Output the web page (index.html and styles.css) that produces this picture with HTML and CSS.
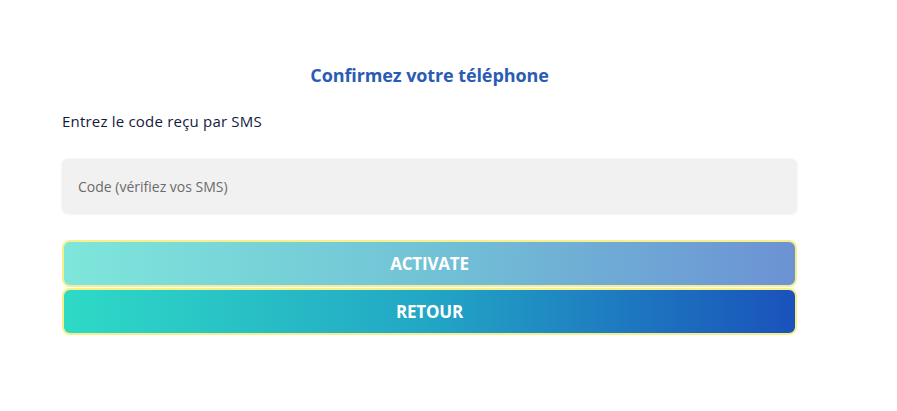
FILE: index.html
```html
<!DOCTYPE html>
<html lang="fr">
<head>
<meta charset="utf-8">
<link rel="stylesheet" href="styles.css">
</head>
<body>
<main class="page">
  <h1 class="title">Confirmez votre téléphone</h1>
  <p class="label">Entrez le code reçu par SMS</p>
  <div class="field">
    <input class="input" type="text" placeholder="Code (vérifiez vos SMS)" autofocus>
  </div>
  <div class="actions">
    <button class="btn btn-disabled">ACTIVATE</button>
    <button class="btn btn-primary">RETOUR</button>
  </div>
</main>
</body>
</html>
```

FILE: styles.css
```css
html, body {
  margin: 0;
  padding: 0;
  background: #ffffff;
}
body {
  font-family: "Open Sans", "Noto Sans", sans-serif;
}
.page {
  width: 735px;
  margin-left: 62px;
  padding-top: 61px;
  display: flex;
  flex-direction: column;
}
.title {
  margin: 0;
  text-align: center;
  font-size: 18px;
  font-weight: 700;
  color: #2a5cb3;
  line-height: 28px;
  letter-spacing: -0.1px;
}
.label {
  margin: 22px 0 0 0;
  font-size: 15px;
  color: #141a3c;
  line-height: 20px;
  letter-spacing: 0.2px;
}
.field {
  margin-top: 28px;
}
.input {
  box-sizing: border-box;
  width: 100%;
  height: 55px;
  border: none;
  border-radius: 6px;
  background: #f1f1f1;
  box-shadow: 0 0 3px rgba(0,0,0,0.08);
  padding: 0 16px;
  font-family: "Open Sans", "Noto Sans", sans-serif;
  font-size: 14px;
  color: #333;
  caret-color: #333;
  outline: none;
}
.input::placeholder {
  color: #6b6b6b;
}
.actions {
  margin-top: 26px;
  display: flex;
  flex-direction: column;
  gap: 1px;
}
.btn {
  box-sizing: border-box;
  width: 100%;
  height: 47px;
  border: 2px solid #f6ef8c;
  border-radius: 8px;
  color: #ffffff;
  font-family: "Open Sans", "Noto Sans", sans-serif;
  font-size: 17px;
  font-weight: 700;
  letter-spacing: -0.2px;
  cursor: pointer;
}
.btn-primary {
  background: linear-gradient(90deg, #2edac6 0%, #22a6c5 50%, #1a52bb 100%);
}
.btn-disabled {
  background: linear-gradient(90deg, #7ee6db 0%, #72c2d6 50%, #6c92d4 100%);
}
```
